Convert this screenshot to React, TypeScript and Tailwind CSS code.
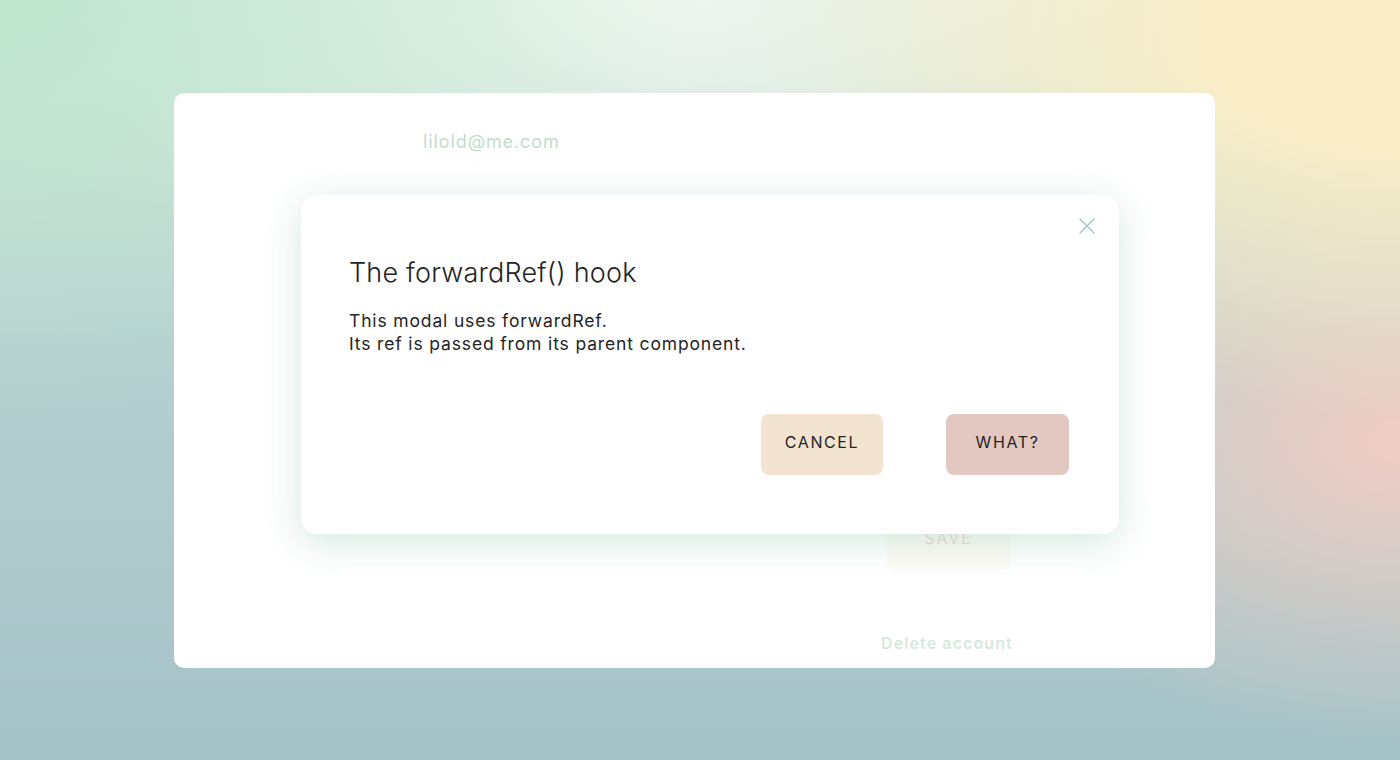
import { X } from 'lucide-react';

function AccountCard() {
  return (
    <div className="relative ml-[174px] h-[575px] w-[1041px] rounded-[10px] bg-white">
      {/* faded page content behind the modal */}
      <div className="pl-[249px] pt-[35px] text-[18px] tracking-[0.9px] text-[#c3dccd]">lilold@me.com</div>

      <div className="absolute left-[713px] top-[417px] flex h-[60px] w-[123px] items-end justify-center rounded-[6px] bg-[#fdfaf4] pb-[20px] text-[16px] tracking-[1.8px] text-[#ecd6d2]">
        SAVE
      </div>
      <div className="absolute left-[707px] top-[538px] text-[16px] font-semibold tracking-[1.1px] text-[#d6e8dc]">
        Delete account
      </div>

      <Modal />
    </div>
  );
}

function Modal() {
  return (
    <div className="absolute left-[127px] top-[102px] flex h-[339px] w-[818px] flex-col rounded-[16px] bg-white pl-[48px] pr-[50px] pt-[61px] shadow-[0_8px_36px_rgba(160,205,185,0.45)]">
      <button className="absolute right-[18px] top-[17px] text-[#9fc7c9]">
        <X size={28} strokeWidth={1.2} />
      </button>
      <h2 className="text-[27px] font-light leading-[34px] tracking-[0.2px] text-[#1f2424]">The forwardRef() hook</h2>
      <p className="mt-[19px] text-[17.5px] leading-[23px] tracking-[0.85px] text-[#1f2424]">
        This modal uses forwardRef.
        <br />
        Its ref is passed from its parent component.
      </p>
      <div className="mt-auto mb-[59px] flex justify-end gap-[63px]">
        <button className="flex h-[61px] w-[122px] items-center justify-center rounded-[8px] bg-[#f2e4d0] pb-[5px] text-[16px] tracking-[1.6px] text-[#1f2424]">CANCEL</button>
        <button className="flex h-[61px] w-[123px] items-center justify-center rounded-[8px] bg-[#e3c8c2] pb-[5px] text-[16px] tracking-[1.6px] text-[#1f2424]">WHAT?</button>
      </div>
    </div>
  );
}

export default function App() {
  return (
    <div
      className="h-[760px] w-[1400px] overflow-hidden pt-[93px] font-['Inter',sans-serif] bg-[#a9c6ca] bg-[radial-gradient(ellipse_700px_420px_at_0%_0%,#bfe6cf_0%,rgba(191,230,207,0)_100%),radial-gradient(ellipse_650px_380px_at_100%_5%,#f8edc7_0%,#f8edc7_30%,rgba(248,237,199,0)_100%),radial-gradient(ellipse_450px_300px_at_100%_58%,#f1cdc4_0%,rgba(241,205,196,0)_100%),radial-gradient(ellipse_800px_260px_at_45%_0%,#eef6ef_0%,rgba(238,246,239,0)_100%),linear-gradient(180deg,#d6e8df_0%,#b5d0d0_45%,#a5c2c7_100%)]"
    >
      <AccountCard />
    </div>
  );
}
